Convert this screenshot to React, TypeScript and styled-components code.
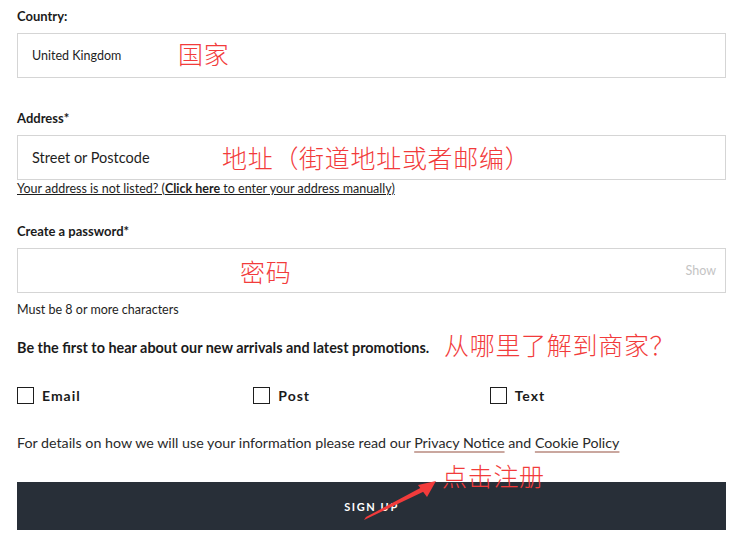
import React from "react";
import styled, { createGlobalStyle } from "styled-components";

const GlobalStyle = createGlobalStyle`
  html, body {
    margin: 0;
    padding: 0;
    background: #ffffff;
  }
  body {
    font-family: Lato, "Noto Sans", "Noto Sans CJK SC", sans-serif;
    color: #1e1e1e;
  }
`;

const Page = styled.div`
  position: relative;
  width: 742px;
  height: 550px;
  box-sizing: border-box;
  padding: 8px 16px 0 17px;
  display: flex;
  flex-direction: column;
`;

const Field = styled.div<{ $gap?: number }>`
  position: relative;
  display: flex;
  flex-direction: column;
  margin-top: ${(p) => p.$gap ?? 0}px;
`;

const Label = styled.label`
  font-size: 13px;
  line-height: 16px;
  font-weight: 700;
  color: #1b1b1b;
  margin-bottom: 9px;
`;

const InputBox = styled.div<{ $size?: number }>`
  height: 45px;
  box-sizing: border-box;
  border: 1px solid #d5d5d5;
  display: flex;
  align-items: center;
  padding: 0 9px 0 14px;
  font-size: ${(p) => p.$size ?? 13}px;
  color: #1e1e1e;
`;

const Value = styled.span`
  flex: 1;
`;

const ShowToggle = styled.span`
  font-size: 12.5px;
  color: #c4c4c4;
`;

const Note = styled.div<{ $top?: number }>`
  font-size: 12.5px;
  line-height: 14px;
  margin-top: ${(p) => p.$top ?? 0}px;
  color: #1e1e1e;
`;

const HelpLink = styled(Note)`
  text-decoration: underline;
  text-underline-offset: 1px;
  b {
    font-weight: 700;
  }
`;

const Promo = styled.div`
  margin-top: 22px;
  font-size: 14.4px;
  line-height: 17px;
  font-weight: 700;
  color: #1b1b1b;
  position: relative;
`;

const Checks = styled.div`
  margin-top: 31px;
  display: grid;
  grid-template-columns: repeat(3, 1fr);
`;

const CheckItem = styled.label`
  display: flex;
  align-items: center;
  gap: 8px;
  font-size: 14px;
  font-weight: 700;
  letter-spacing: 1px;
  color: #1b1b1b;
`;

const Box = styled.span`
  width: 17px;
  height: 17px;
  flex: none;
  box-sizing: border-box;
  border: 1px solid #1e1e1e;
  background: #fff;
`;

const Disclaimer = styled.div`
  margin-top: 30px;
  font-size: 14.25px;
  line-height: 18px;
  color: #2a2a2a;
`;

const PolicyLink = styled.span`
  text-decoration: underline;
  text-decoration-color: #caa79f;
  text-decoration-thickness: 2px;
  text-underline-offset: 3px;
`;

const SignUp = styled.button`
  margin-top: 30px;
  height: 48px;
  width: 100%;
  border: none;
  background: #282f38;
  color: #ffffff;
  font-family: Lato, "Noto Sans", sans-serif;
  font-size: 11px;
  font-weight: 700;
  letter-spacing: 1.6px;
`;

const Annotation = styled.span<{ $left: number; $top: number }>`
  position: absolute;
  left: ${(p) => p.$left}px;
  top: ${(p) => p.$top}px;
  font-family: "Noto Sans CJK SC", sans-serif;
  font-weight: 300;
  font-size: 25px;
  line-height: 28px;
  color: #f23b3b;
  white-space: nowrap;
  letter-spacing: 0.7px;
`;

const ArrowSvg = styled.svg`
  position: absolute;
  left: 0;
  top: 0;
  pointer-events: none;
`;

export default function App() {
  return (
    <>
      <GlobalStyle />
      <Page>
        <Field>
          <Label>Country:</Label>
          <InputBox $size={12.5}>
            <Value>United Kingdom</Value>
          </InputBox>
          <Annotation $left={161} $top={31}>
            国家
          </Annotation>
        </Field>

        <Field $gap={32}>
          <Label>Address*</Label>
          <InputBox $size={14.5}>
            <Value>Street or Postcode</Value>
          </InputBox>
          <Annotation $left={205} $top={33}>
            地址（街道地址或者邮编）
          </Annotation>
        </Field>
        <HelpLink $top={2}>
          Your address is not listed? (<b>Click here</b> to enter your address
          manually)
        </HelpLink>

        <Field $gap={27}>
          <Label>Create a password*</Label>
          <InputBox>
            <Value />
            <ShowToggle>Show</ShowToggle>
          </InputBox>
          <Annotation $left={223} $top={34}>
            密码
          </Annotation>
        </Field>
        <Note $top={10}>Must be 8 or more characters</Note>

        <Promo>
          Be the first to hear about our new arrivals and latest promotions.
          <Annotation $left={427} $top={-9}>
            从哪里了解到商家？
          </Annotation>
        </Promo>

        <Checks>
          <CheckItem>
            <Box />
            Email
          </CheckItem>
          <CheckItem>
            <Box />
            Post
          </CheckItem>
          <CheckItem>
            <Box />
            Text
          </CheckItem>
        </Checks>

        <Disclaimer>
          For details on how we will use your information please read our{" "}
          <PolicyLink>Privacy Notice</PolicyLink> and{" "}
          <PolicyLink>Cookie Policy</PolicyLink>
        </Disclaimer>

        <SignUp>SIGN UP</SignUp>

        <Annotation $left={442} $top={461}>
          点击注册
        </Annotation>
        <ArrowSvg width="742" height="550" viewBox="0 0 742 550">
          <polygon
            points="364,520 366,517 424,486 427,490"
            fill="#f23b3b"
          />
          <polygon points="436,481 418,485 427,497" fill="#f23b3b" />
        </ArrowSvg>
      </Page>
    </>
  );
}
